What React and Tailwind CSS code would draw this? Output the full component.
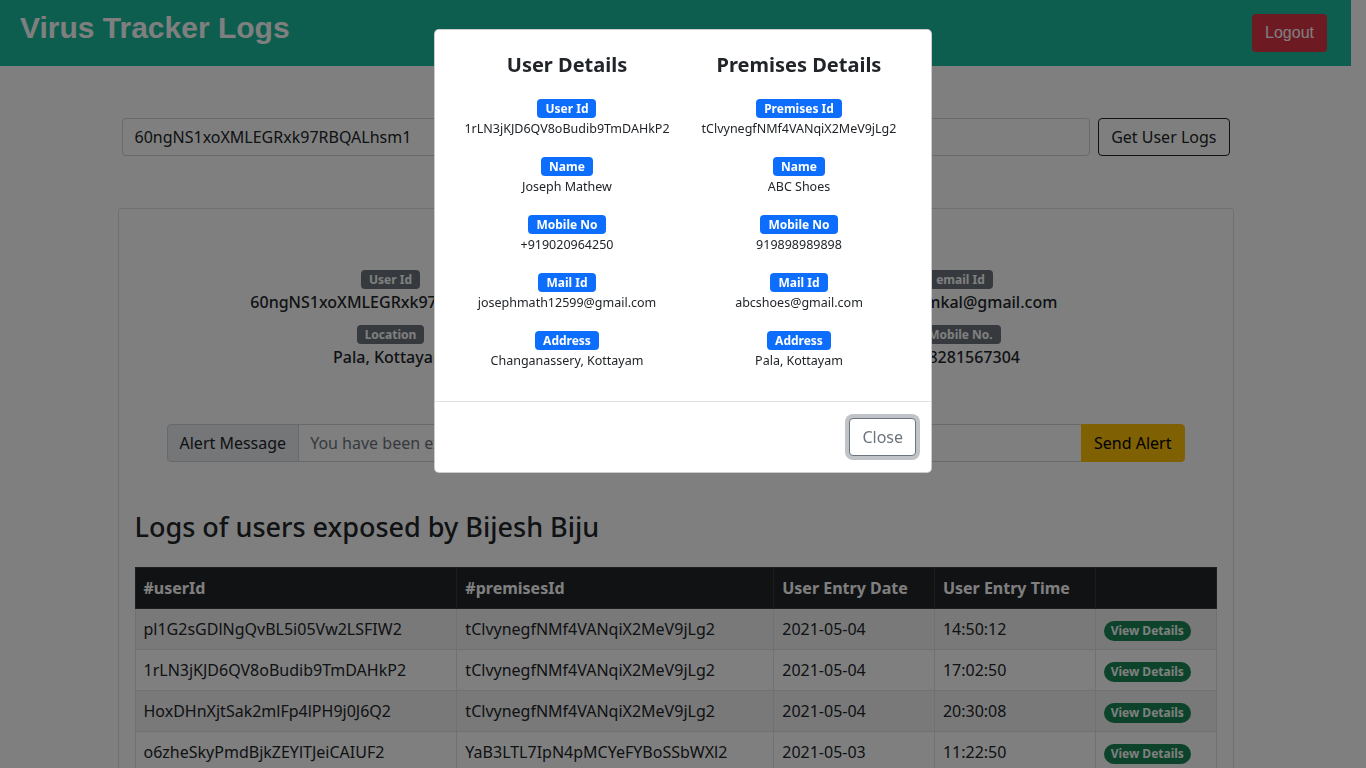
import React from "react";

// ── Data ──────────────────────────────────────────────────────────────────────
const EXPOSED_USER = [
  [
    { label: "User Id", value: "60ngNS1xoXMLEGRxk97RBQALhsm1" },
    { label: "Location", value: "Pala, Kottayam" },
  ],
  [
    { label: "Name", value: "Bijesh Biju" },
    { label: "Status", value: "Covid Positive" },
  ],
  [
    { label: "email Id", value: "bijeshtumkal@gmail.com" },
    { label: "Mobile No.", value: "+918281567304" },
  ],
];

const LOGS = [
  ["pl1G2sGDlNgQvBL5i05Vw2LSFIW2", "tClvynegfNMf4VANqiX2MeV9jLg2", "2021-05-04", "14:50:12"],
  ["1rLN3jKJD6QV8oBudib9TmDAHkP2", "tClvynegfNMf4VANqiX2MeV9jLg2", "2021-05-04", "17:02:50"],
  ["HoxDHnXjtSak2mlFp4lPH9j0J6Q2", "tClvynegfNMf4VANqiX2MeV9jLg2", "2021-05-04", "20:30:08"],
  ["o6zheSkyPmdBjkZEYlTJeiCAIUF2", "YaB3LTL7IpN4pMCYeFYBoSSbWXl2", "2021-05-03", "11:22:50"],
];

const USER_DETAILS = [
  { label: "User Id", value: "1rLN3jKJD6QV8oBudib9TmDAHkP2" },
  { label: "Name", value: "Joseph Mathew" },
  { label: "Mobile No", value: "+919020964250" },
  { label: "Mail Id", value: "josephmath12599@gmail.com" },
  { label: "Address", value: "Changanassery, Kottayam" },
];

const PREMISES_DETAILS = [
  { label: "Premises Id", value: "tClvynegfNMf4VANqiX2MeV9jLg2" },
  { label: "Name", value: "ABC Shoes" },
  { label: "Mobile No", value: "919898989898" },
  { label: "Mail Id", value: "abcshoes@gmail.com" },
  { label: "Address", value: "Pala, Kottayam" },
];

const Badge = ({ children, color }) => (
  <span
    className={`inline-block rounded-[4px] px-[8px] py-[3.5px] text-[12px] leading-[12px] font-bold text-white ${color}`}
  >
    {children}
  </span>
);

const DetailColumn = ({ title, items }) => (
  <div className="flex flex-col items-center text-center">
    <h5 className="text-[20px] leading-6 font-bold">{title}</h5>
    <div className="mt-[22px] flex flex-col gap-[19px]">
      {items.map((it) => (
        <div key={it.label} className="flex flex-col items-center">
          <Badge color="bg-[#0d6efd]">{it.label}</Badge>
          <p className="mt-[2px] text-[12.5px] leading-[18px]">{it.value}</p>
        </div>
      ))}
    </div>
  </div>
);

export default function App() {
  return (
    <div className="h-screen overflow-hidden bg-white pr-[15px] font-['Noto_Sans',sans-serif] text-[#212529]">
      {/* ── Top bar ─────────────────────────────────────────────────────── */}
      <header className="h-[66px] bg-[#1abc9c] flex items-center justify-between pl-5 pr-6">
        <h1 className="-mt-[10px] font-['Liberation_Sans',Arial,sans-serif] text-[30px] leading-none font-bold text-white">
          Virus Tracker Logs
        </h1>
        <button className="h-[38px] px-[13px] rounded-[4px] bg-[#dc3545] font-['Liberation_Sans',Arial,sans-serif] text-base text-white">
          Logout
        </button>
      </header>

      <main className="w-[1116px] mx-auto">
        {/* search row */}
        <div className="mt-[52px] px-1 flex gap-2">
          <input
            readOnly
            value="60ngNS1xoXMLEGRxk97RBQALhsm1"
            className="flex-1 h-[38px] px-3 border border-[#ced4da] rounded-[4px] text-base text-[#212529] outline-none"
          />
          <button className="h-[38px] px-3 border border-[#212529] rounded-[4px] text-base text-[#212529]">
            Get User Logs
          </button>
        </div>

        {/* exposed user card */}
        <div className="mt-[52px] border border-black/[0.125] rounded-[4px] p-4">
          <div className="w-[855px] mx-auto grid grid-cols-3 pt-[45px]">
            {EXPOSED_USER.map((col, i) => (
              <div key={i} className="flex flex-col items-center text-center">
                {col.map((f) => (
                  <div key={f.label} className="flex flex-col items-center">
                    <Badge color="bg-[#6c757d]">{f.label}</Badge>
                    <h6 className="mt-[4px] mb-[13px] text-base leading-[19px] font-medium">{f.value}</h6>
                  </div>
                ))}
              </div>
            ))}
          </div>

          {/* alert input group */}
          <div className="w-[1018px] mx-auto mt-[44px] flex h-[38px] text-base">
            <span className="px-3 flex items-center bg-[#e9ecef] border border-[#ced4da] rounded-l-[4px] whitespace-nowrap">
              Alert Message
            </span>
            <input
              readOnly
              placeholder="You have been exposed to a COVID-19 positive person. Please go into quarantine."
              className="flex-1 px-3 border-y border-[#ced4da] -ml-px placeholder:text-[#6c757d] outline-none"
            />
            <button className="px-3 bg-[#ffc107] border border-[#ffc107] rounded-r-[4px] text-black">
              Send Alert
            </button>
          </div>

          <h3 className="mt-[48px] mb-[23px] text-[27px] leading-[34px] font-medium">
            Logs of users exposed by Bijesh Biju
          </h3>

          <table className="w-full border-collapse text-base text-left">
            <colgroup>
              <col className="w-[322px]" />
              <col className="w-[317px]" />
              <col className="w-[161px]" />
              <col className="w-[161px]" />
              <col className="w-[121px]" />
            </colgroup>
            <thead>
              <tr className="bg-[#212529] text-white">
                {["#userId", "#premisesId", "User Entry Date", "User Entry Time", ""].map((h, i) => (
                  <th key={i} className="px-2 py-2 leading-6 font-bold border border-[#373b3e]">
                    {h}
                  </th>
                ))}
              </tr>
            </thead>
            <tbody>
              {LOGS.map((row, i) => (
                <tr key={i} className={i % 2 === 0 ? "bg-black/[0.05]" : "bg-white"}>
                  {row.map((c, j) => (
                    <td key={j} className="px-2 py-2 leading-6 border border-[#dee2e6]">
                      {c}
                    </td>
                  ))}
                  <td className="px-2 py-2 leading-6 border border-[#dee2e6]">
                    <span className="inline-block rounded-full bg-[#198754] px-[7px] py-[4px] text-[12px] leading-[12px] font-bold text-white align-middle">
                      View Details
                    </span>
                  </td>
                </tr>
              ))}
            </tbody>
          </table>
        </div>
      </main>

      {/* ── Modal backdrop + dialog ─────────────────────────────────────── */}
      <div className="fixed inset-0 bg-black/50" />
      <div className="fixed inset-0 flex justify-center items-start pt-[29px]">
        <div className="w-[498px] bg-white border border-black/20 rounded-[5px]">
          <div className="grid grid-cols-2 px-4 pt-[23px] pb-[31px]">
            <DetailColumn title="User Details" items={USER_DETAILS} />
            <DetailColumn title="Premises Details" items={PREMISES_DETAILS} />
          </div>
          <div className="border-t border-[#dee2e6] flex justify-end px-[15px] py-4">
            <button className="h-[38px] px-3 rounded-[4px] border border-[#6c757d] bg-white text-base text-[#6c757d] ring-4 ring-[#828a91]/50">
              Close
            </button>
          </div>
        </div>
      </div>
    </div>
  );
}
